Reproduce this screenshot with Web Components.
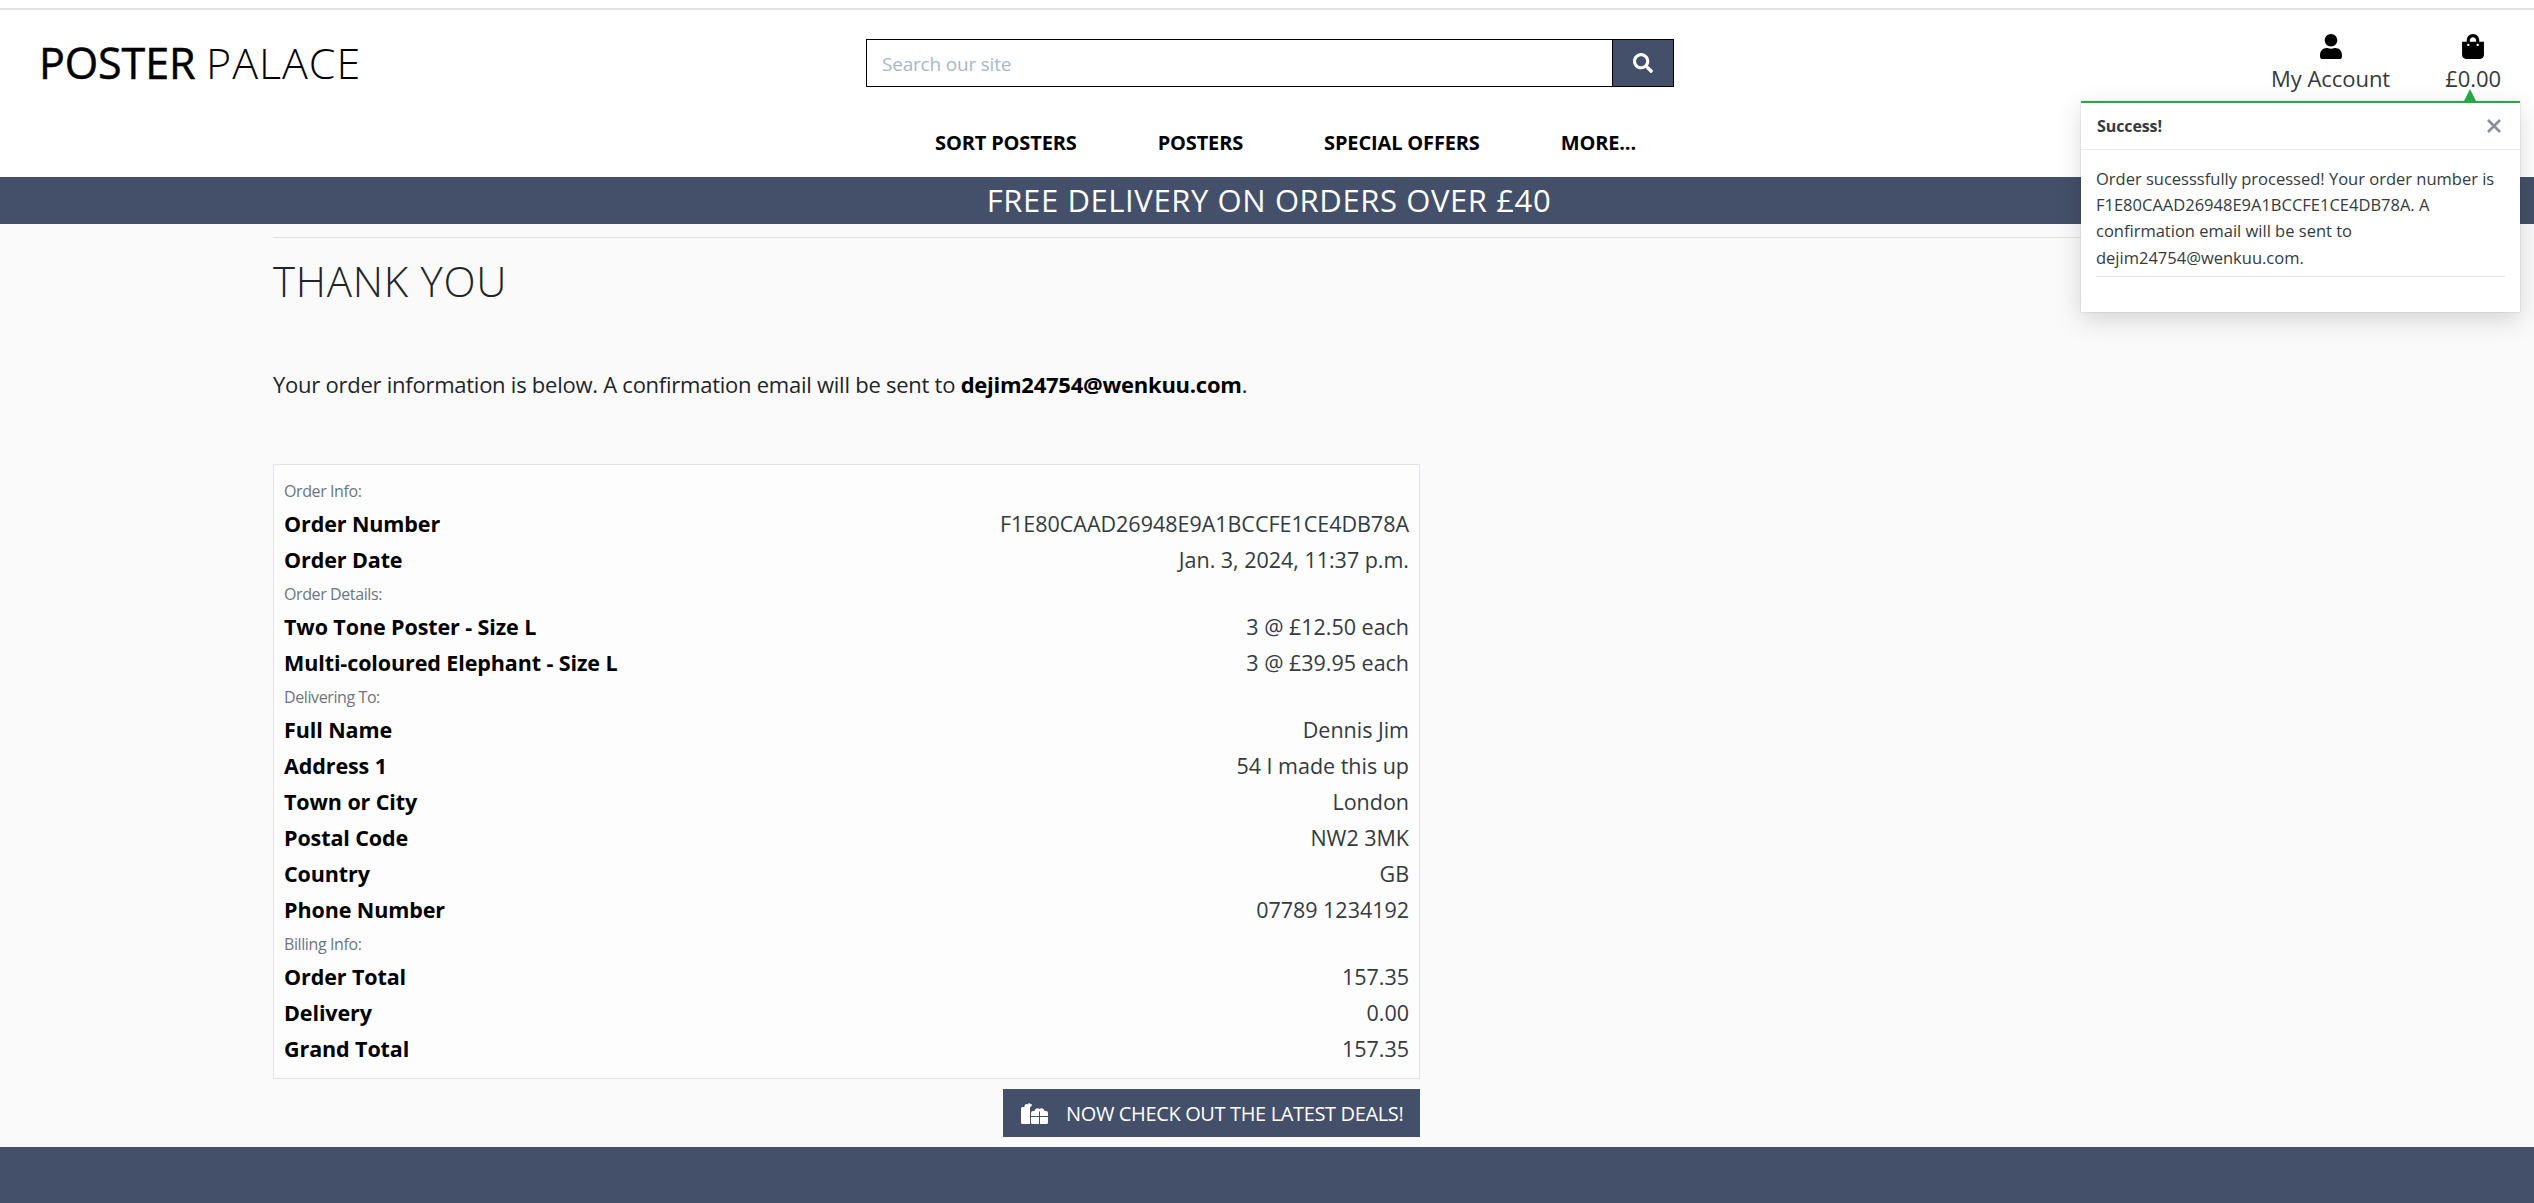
<!DOCTYPE html>
<html lang="en"><head><meta charset="utf-8"><title>Poster Palace</title>
<style>
html,body{margin:0;padding:0;height:1203px;overflow:hidden;background:#fafafa;font-family:"Open Sans","Noto Sans",sans-serif;color:#212529}
body{display:flex;flex-direction:column}
pp-footer{flex:1}
</style></head><body>
<template id="t-header"><style>
:host{display:block;background:#fff;position:relative;height:177px;box-sizing:border-box;padding-top:8px}
.top{border-top:2px solid #e2e3e5;display:grid;grid-template-columns:827px 808px 1fr;padding:29px 0 0 39px;align-items:start}
.logo{font-size:43px;line-height:48px;letter-spacing:-.1px;word-spacing:-.5px;color:#000;white-space:nowrap}
.logo b{font-weight:400;-webkit-text-stroke:.5px #000}.logo span{font-weight:300;letter-spacing:1px}
.acc{display:flex;justify-content:flex-end;gap:55px;margin-top:-5px;padding-right:33px}
</style>
<div class="top"><div class="logo"><b>POSTER</b> <span>PALACE</span></div><slot name="search"></slot><div class="acc"><slot name="acc"></slot></div></div>
<slot name="nav"></slot><slot name="toast"></slot></template>

<template id="t-search"><style>
:host{display:flex;height:48px;box-sizing:border-box;border:1px solid #000;width:808px}
.i{flex:1;padding-left:15px;font-size:19px;line-height:49px;color:#aab7c4;letter-spacing:-.2px}
.b{width:60px;background:#445069;border-left:1px solid #000;display:flex;align-items:center;justify-content:center}
svg{width:20px;height:20px;fill:#fff}
</style><div class="i"><slot></slot></div><div class="b"><svg viewBox="0 0 512 512"><path d="M505 442.7L405.3 343c-4.5-4.5-10.6-7-17-7H372c27.6-35.3 44-79.7 44-128C416 93.1 322.9 0 208 0S0 93.1 0 208s93.1 208 208 208c48.3 0 92.7-16.4 128-44v16.3c0 6.4 2.5 12.5 7 17l99.7 99.7c9.4 9.4 24.6 9.4 33.9 0l28.3-28.3c9.4-9.4 9.4-24.6.1-34zM208 336c-70.7 0-128-57.2-128-128 0-70.7 57.2-128 128-128 70.7 0 128 57.2 128 128 0 70.7-57.2 128-128 128z"/></svg></div></template>

<template id="t-acc"><style>
:host{display:flex;flex-direction:column;align-items:center;color:#343a40;font-size:22px;letter-spacing:-.05px;line-height:30px;white-space:nowrap}
::slotted(svg){width:22px;height:25px;display:block;margin-bottom:4px;fill:#000}
</style><slot name="i"></slot><slot></slot></template>

<template id="t-nav"><style>
:host{display:flex;justify-content:center;gap:81px;margin-top:37px;padding-left:37px;font-size:20px;font-weight:700;line-height:26px;color:#000;letter-spacing:-.15px}
</style><slot></slot></template>

<template id="t-toast"><style>
:host{position:absolute;left:2081px;top:101px;width:439px;height:211px;box-sizing:border-box;background:#fff;border-top:2px solid #28a745;box-shadow:0 8px 24px rgba(0,0,0,.15),0 0 1px rgba(0,0,0,.3);font-size:16px;color:#343a40;z-index:3}
.arrow{position:absolute;left:383px;top:-14px;width:0;height:0;border-left:6px solid transparent;border-right:6px solid transparent;border-bottom:12px solid #28a745}
.h{display:flex;justify-content:space-between;align-items:center;height:46px;padding:0 19px 0 16px;border-bottom:1px solid #e9ecef;font-weight:700;font-size:16px;letter-spacing:-.1px}
svg{width:14px;height:14px;stroke:#8b8f93;stroke-width:2.6;fill:none}
.b{padding:16px 15px 0;line-height:26.2px;font-size:16.5px}
.b div{border-bottom:1px solid #dee2e6;padding:0 0 5px}
</style><div class="arrow"></div><div class="h"><span>Success!</span><svg viewBox="0 0 14 14"><path d="M1 1L13 13M13 1L1 13"/></svg></div><div class="b"><div><slot></slot></div></div></template>

<template id="t-banner"><style>
:host{display:block;height:47px;background:#445069;color:#fff;text-align:center;font-size:31px;line-height:46px;letter-spacing:.6px;white-space:nowrap;padding-left:4px}
</style><slot></slot></template>

<template id="t-main"><style>
:host{display:block;padding:13px 0 0 273px;width:1147px}
.hr{width:1988px;border-top:1px solid #e2e3e5;height:0}
h1{font-weight:300;font-size:42px;line-height:56px;margin:15px 0 0;letter-spacing:.75px;color:#212529}
p{font-size:22px;margin:60px 0 0;line-height:30px;letter-spacing:-.25px}
.s{margin-top:65px}
</style><div class="hr"></div><h1>THANK YOU</h1><p><slot name="intro"></slot></p><div class="s"><slot></slot></div></template>

<template id="t-box"><style>
:host{display:block;box-sizing:border-box;border:1px solid #e2e3e8;background:#fdfdfe;padding:10px 10px 0;height:615px}
</style><slot></slot></template>

<template id="t-label"><style>
:host{display:block;font-size:16px;line-height:32px;height:31px;color:#6c757d;letter-spacing:-.4px}
</style><slot></slot></template>

<template id="t-row"><style>
:host{display:flex;justify-content:space-between;height:36px;line-height:35px;font-size:21.5px;letter-spacing:-.02px;color:#343a40;white-space:nowrap}
::slotted(b){color:#000;font-weight:700;letter-spacing:-.1px}
</style><slot name="k"></slot><slot></slot></template>

<template id="t-btn"><style>
:host{display:flex;margin:10px 0 0 auto;width:417px;height:48px;box-sizing:border-box;background:#445069;color:#fff;align-items:center;padding-left:18px;font-size:20px;letter-spacing:-.36px;white-space:nowrap}
svg{width:27px;height:21px;fill:#fff;margin-right:18px;flex:none}
</style><svg viewBox="0 0 27 21"><path d="M1.500 4H3.500V2.500L5 1 6.500 1.500 8 0 9.500 1 11 1.500 10.500 3 9 4.500V21H1.500A1.500 1.500 0 0 1 0 19.500V5.500A1.500 1.500 0 0 1 1.500 4z"/><path d="M10 10a2 2 0 0 1 2-2h1.500a3 3 0 0 1 5-2 3 3 0 0 1 5 2H25a2 2 0 0 1 2 2v3h-8v-4.500h-1V13h-8zM10 14h8v7h-6.500a1.500 1.500 0 0 1-1.500-1.500zM19 14h8v5.500a1.500 1.500 0 0 1-1.500 1.500H19z"/></svg><slot></slot></template>

<template id="t-footer"><style>
:host{display:block;background:#445069;margin-top:10px}
</style></template>

<script>
[['pp-header','t-header'],['pp-search','t-search'],['pp-acc','t-acc'],['pp-nav','t-nav'],['pp-toast','t-toast'],['pp-banner','t-banner'],['pp-main','t-main'],['pp-box','t-box'],['pp-label','t-label'],['pp-row','t-row'],['pp-btn','t-btn'],['pp-footer','t-footer']].forEach(([n,t])=>{
customElements.define(n,class extends HTMLElement{constructor(){super();this.attachShadow({mode:'open'}).appendChild(document.getElementById(t).content.cloneNode(true))}})});
</script>

<pp-header>
<pp-search slot="search">Search our site</pp-search>
<pp-acc slot="acc"><svg slot="i" viewBox="0 0 448 512"><path d="M224 256c70.700 0 128-57.300 128-128S294.700 0 224 0 96 57.300 96 128s57.300 128 128 128zm89.600 32h-16.700c-22.200 10.200-46.900 16-72.900 16s-50.600-5.800-72.900-16h-16.700C60.200 288 0 348.200 0 422.400V464c0 26.500 21.500 48 48 48h352c26.500 0 48-21.500 48-48v-41.600c0-74.200-60.200-134.400-134.400-134.400z"/></svg>My Account</pp-acc>
<pp-acc slot="acc"><svg slot="i" viewBox="0 0 448 512"><path d="M352 160v-32C352 57.420 294.579 0 224 0 153.420 0 96 57.420 96 128v32H0v272c0 44.183 35.817 80 80 80h288c44.183 0 80-35.817 80-80V160h-96zm-192-32c0-35.290 28.710-64 64-64s64 28.710 64 64v32H160v-32zm160 120c-13.255 0-24-10.745-24-24s10.745-24 24-24 24 10.745 24 24-10.745 24-24 24zm-192 0c-13.255 0-24-10.745-24-24s10.745-24 24-24 24 10.745 24 24-10.745 24-24 24z"/></svg>£0.00</pp-acc>
<pp-nav slot="nav"><span>SORT POSTERS</span><span>POSTERS</span><span>SPECIAL OFFERS</span><span>MORE...</span></pp-nav>
<pp-toast slot="toast">Order sucesssfully processed! Your order number is F1E80CAAD26948E9A1BCCFE1CE4DB78A. A confirmation email will be sent to dejim24754@wenkuu.com.</pp-toast>
</pp-header>
<pp-banner>FREE DELIVERY ON ORDERS OVER £40</pp-banner>
<pp-main>
<span slot="intro">Your order information is below. A confirmation email will be sent to <b style="color:#000">dejim24754@wenkuu.com</b>.</span>
<pp-box>
<pp-label>Order Info:</pp-label>
<pp-row><b slot="k">Order Number</b>F1E80CAAD26948E9A1BCCFE1CE4DB78A</pp-row>
<pp-row><b slot="k">Order Date</b>Jan. 3, 2024, 11:37 p.m.</pp-row>
<pp-label>Order Details:</pp-label>
<pp-row><b slot="k">Two Tone Poster - Size L</b>3 @ £12.50 each</pp-row>
<pp-row><b slot="k">Multi-coloured Elephant - Size L</b>3 @ £39.95 each</pp-row>
<pp-label>Delivering To:</pp-label>
<pp-row><b slot="k">Full Name</b>Dennis Jim</pp-row>
<pp-row><b slot="k">Address 1</b>54 I made this up</pp-row>
<pp-row><b slot="k">Town or City</b>London</pp-row>
<pp-row><b slot="k">Postal Code</b>NW2 3MK</pp-row>
<pp-row><b slot="k">Country</b>GB</pp-row>
<pp-row><b slot="k">Phone Number</b>07789 1234192</pp-row>
<pp-label>Billing Info:</pp-label>
<pp-row><b slot="k">Order Total</b>157.35</pp-row>
<pp-row><b slot="k">Delivery</b>0.00</pp-row>
<pp-row><b slot="k">Grand Total</b>157.35</pp-row>
</pp-box>
<pp-btn>NOW CHECK OUT THE LATEST DEALS!</pp-btn>
</pp-main>
<pp-footer></pp-footer>
</body></html>
